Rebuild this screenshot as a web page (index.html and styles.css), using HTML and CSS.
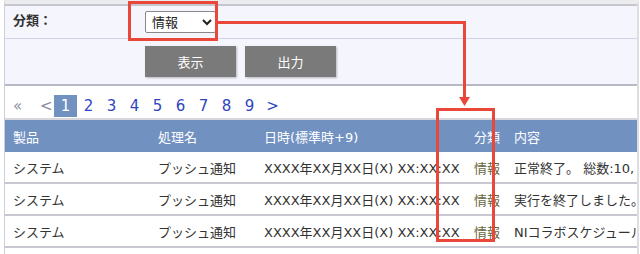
FILE: index.html
```html
<!DOCTYPE html>
<html lang="ja">
<head>
  <meta charset="UTF-8">
  <title>ログ一覧</title>
  <link rel="stylesheet" href="styles.css">
</head>
<body>
  <div class="page">
    <div class="search-panel">
      <div class="search-row">
        <label class="search-label" for="category">分類：</label>
        <select id="category" class="category-select">
          <option selected>情報</option>
          <option>警告</option>
          <option>エラー</option>
        </select>
      </div>
      <div class="button-row">
        <button class="btn">表示</button>
        <button class="btn">出力</button>
      </div>
    </div>

    <div class="pager">
      <span class="pager-nav">&laquo;</span>
      <span class="pager-nav">&lt;</span>
      <span class="pager-item current">1</span>
      <span class="pager-item">2</span>
      <span class="pager-item">3</span>
      <span class="pager-item">4</span>
      <span class="pager-item">5</span>
      <span class="pager-item">6</span>
      <span class="pager-item">7</span>
      <span class="pager-item">8</span>
      <span class="pager-item">9</span>
      <span class="pager-item">&gt;</span>
    </div>

    <table class="log-table">
      <colgroup>
        <col class="col-product">
        <col class="col-process">
        <col class="col-date">
        <col class="col-type">
        <col>
      </colgroup>
      <thead>
        <tr>
          <th>製品</th>
          <th>処理名</th>
          <th>日時(標準時+9)</th>
          <th>分類</th>
          <th>内容</th>
        </tr>
      </thead>
      <tbody>
        <tr>
          <td>システム</td>
          <td>プッシュ通知</td>
          <td>XXXX年XX月XX日(X) XX:XX:XX</td>
          <td class="type">情報</td>
          <td>正常終了。 総数:10, 成功:10</td>
        </tr>
        <tr>
          <td>システム</td>
          <td>プッシュ通知</td>
          <td>XXXX年XX月XX日(X) XX:XX:XX</td>
          <td class="type">情報</td>
          <td>実行を終了しました。</td>
        </tr>
        <tr>
          <td>システム</td>
          <td>プッシュ通知</td>
          <td>XXXX年XX月XX日(X) XX:XX:XX</td>
          <td class="type">情報</td>
          <td>NIコラボスケジュール連携</td>
        </tr>
      </tbody>
    </table>
  </div>

  <!-- annotation overlay -->
  <svg class="annotation" width="640" height="254" viewBox="0 0 640 254">
    <rect x="129.5" y="2.5" width="87" height="37" fill="none" stroke="#e8473a" stroke-width="3"/>
    <polyline points="218,22.5 464.5,22.5 464.5,98" fill="none" stroke="#e8473a" stroke-width="3"/>
    <polygon points="459,97 470,97 464.5,106" fill="#e8473a"/>
    <rect x="437.5" y="109.5" width="56" height="131" fill="none" stroke="#e8473a" stroke-width="3"/>
  </svg>
</body>
</html>
```

FILE: styles.css
```css
body {
  margin: 0;
  background: #fff;
  font-family: "DejaVu Sans", "Noto Sans CJK JP", sans-serif;
  font-size: 13px;
  color: #333;
  width: 640px;
  height: 254px;
  overflow: hidden;
}
.page {
  margin-left: 4px;
  width: 632px;
  border-left: 1px solid #cfcfd4;
  border-right: 2px solid #dedee2;
  border-top: 4px solid #ececee;
  height: 250px;
  overflow: hidden;
}
.search-panel {
  background: #f5f5fe;
  border-top: 2px solid #c6c6cf;
  border-bottom: 2px solid #b8b8c6;
}
.search-row {
  display: flex;
  align-items: center;
  height: 32px;
  border-bottom: 1px solid #d2d2e6;
}
.search-label {
  width: 132px;
  padding-left: 8px;
  font-weight: bold;
  font-size: 13px;
  margin-top: -6px;
}
.category-select {
  width: 71px;
  height: 22px;
  font-family: inherit;
  font-size: 13px;
  border: 1px solid #888;
  border-radius: 2px;
  background: #fff;
  padding: 0 2px;
  color: #222;
}
.button-row {
  display: flex;
  gap: 9px;
  padding: 7px 0 7px 140px;
}
.btn {
  width: 91px;
  height: 31px;
  border: none;
  background: #7a7a7a;
  color: #fff;
  font-family: inherit;
  font-size: 13px;
  box-shadow: 1px 1px 2px rgba(0, 0, 0, 0.25);
  cursor: pointer;
}
.pager {
  display: flex;
  align-items: flex-end;
  height: 31px;
  padding-left: 8px;
  font-size: 15px;
}
.pager-nav {
  color: #8a8a9a;
  width: 27px;
  line-height: 22px;
}
.pager-nav:nth-child(2) {
  width: 14px;
}
.pager-item {
  color: #2f45c0;
  width: 23px;
  text-align: center;
  line-height: 22px;
}
.pager-item.current {
  background: #7191c1;
  color: #fff;
  height: 22px;
}
.log-table {
  width: 100%;
  table-layout: fixed;
  border-collapse: collapse;
  border-top: 2px solid #d6d6dc;
  margin-top: 1px;
  white-space: nowrap;
}
.log-table th {
  background: #7191c1;
  color: #fff;
  font-weight: normal;
  text-align: left;
  height: 32px;
  padding: 0 0 0 8px;
  overflow: hidden;
}
.log-table td {
  height: 30px;
  padding: 0 0 0 8px;
  border-bottom: 2px solid #c8c8d2;
  overflow: hidden;
}
.col-product { width: 145px; }
.col-process { width: 106px; }
.col-date { width: 210px; }
.col-type { width: 40px; }
.type { color: #66663c; }
.annotation {
  position: absolute;
  left: 0;
  top: 0;
  pointer-events: none;
}
```
